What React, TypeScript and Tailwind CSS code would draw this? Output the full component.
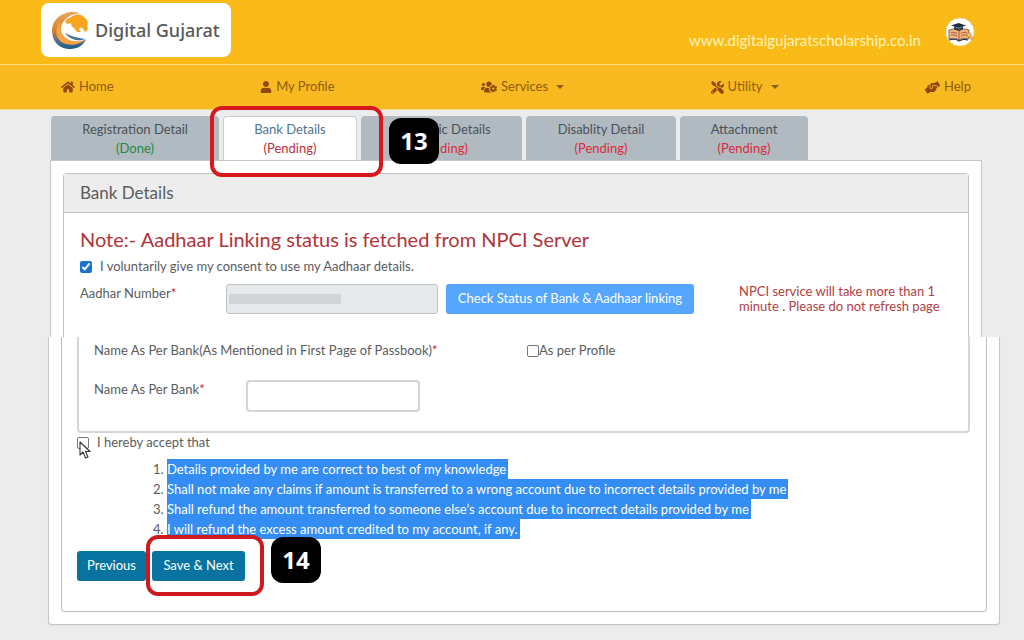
import type { ReactNode } from "react";
import { FaHandsHelping, FaHome, FaTools, FaUser, FaUsersCog } from "react-icons/fa";

type NavItem = { label: string; icon: ReactNode; menu?: boolean };

const navItems: NavItem[] = [
  { label: "Home", icon: <FaHome size={14} /> },
  { label: "My Profile", icon: <FaUser size={12} /> },
  { label: "Services", icon: <FaUsersCog size={16} />, menu: true },
  { label: "Utility", icon: <FaTools size={13} />, menu: true },
  { label: "Help", icon: <FaHandsHelping size={15} /> },
];

const terms = [
  "Details provided by me are correct to best of my knowledge",
  "Shall not make any claims if amount is transferred to a wrong account due to incorrect details provided by me",
  "Shall refund the amount transferred to someone else’s account due to incorrect details provided by me",
  "I will refund the excess amount credited to my account, if any.",
];

function GujaratMark() {
  return (
    <svg viewBox="0 0 38 40" className="h-10 w-[38px] shrink-0" aria-hidden="true">
      <defs>
        <linearGradient id="ring" x1="0" y1="0" x2="0" y2="1">
          <stop offset="0" stopColor="#e8a45a" />
          <stop offset="0.5" stopColor="#d9822f" />
          <stop offset="0.75" stopColor="#5f6f80" />
          <stop offset="1" stopColor="#175a90" />
        </linearGradient>
      </defs>
      <path d="M29 3C14-1 1 8 1 21c0 11 8 18 18 18 8 0 14-4 16-10-6 5-14 6-20 1C4 21 11 5 29 3Z" fill="url(#ring)" />
      <path d="M10 11C3 18 4 29 12 33c7 3 16 2 22-3-7 2-14 2-19-2-5-4-7-10-5-17Z" fill="#f4a243" />
      <path d="M14 23c5 3 12 5 20 6-5 3-15 1-20-6Z" fill="#41749f" />
      <path d="M16 9c3-1 5-3 8-4 4-1 7 0 9 2l3 3c1 2 1 4 0 6l1 3-3 3-2-3c-1-2-3-1-4 0l2 3h-4l-3-4c-2-1-3-3-3-5l-4 1-2-2Z" fill="#f9a51f" />
    </svg>
  );
}

function ScholarBadge() {
  return (
    <svg viewBox="0 0 30 30" className="size-[30px]" aria-hidden="true">
      <circle cx="15" cy="15" r="14" fill="#fff" stroke="#d9cfae" strokeWidth="0.6" />
      <path d="M4 13l4-1c3-.5 5 .5 6 2 2-2 4-2.500 6-2l4 1v9c-4-1-7-1-10 1-3-2-6-2-10-1Z" fill="#f0b878" stroke="#5b3a42" strokeWidth="0.7" />
      <path d="M14 14v9M6 15.500c2-.5 4 0 6 1M6 18c2-.5 4 0 6 1M16 16.500c2-1 4-1.500 6-1M16 19c2-1 4-1.500 6-1" stroke="#a8484b" strokeWidth="0.9" fill="none" />
      <path d="M4 23c4-1 8-1 10 1 3-2 6-2 9-1" stroke="#27364d" strokeWidth="1.100" fill="none" />
      <path d="M6 8.500l7.500-2.500L21 8.500 13.500 11Z" fill="#1d2d44" />
      <path d="M9 9.500v3c3 1.500 6 1.500 9 0v-3l-4.500 2Z" fill="#2c3c55" />
      <circle cx="24" cy="18" r="2" fill="#f7c76f" stroke="#c9812c" strokeWidth="0.8" />
      <circle cx="26.500" cy="21" r="1.500" fill="#f7c76f" stroke="#d98e34" strokeWidth="0.8" />
    </svg>
  );
}

function Caret() {
  return (
    <svg viewBox="0 0 8 4" className="ml-1 h-1 w-2" aria-hidden="true">
      <path d="M0 0h8L4 4Z" fill="currentColor" />
    </svg>
  );
}

function StepBadge({ step, className }: { step: number; className: string }) {
  return (
    <span
      className={`absolute z-20 flex h-[46px] w-[50px] items-center justify-center rounded-xl bg-black font-['Open_Sans',sans-serif] text-2xl font-bold text-white ${className}`}
    >
      {step}
    </span>
  );
}

function Tab({ title, state, className, active, done }: { title: string; state: string; className: string; active?: boolean; done?: boolean }) {
  return (
    <button
      type="button"
      role="tab"
      aria-selected={!!active}
      className={`h-11 rounded-t-sm border border-b-0 leading-[19px] whitespace-nowrap ${
        active ? "border-[#c9ced2] bg-white text-[#4a7590]" : "border-[#b3bcc2] bg-[#b0bac0] text-[#4a5158]"
      } ${className}`}
    >
      <span className="block">{title}</span>
      <span className={`block ${done ? "text-[#25883e]" : active ? "text-[#b8323f]" : "text-[#dc2a3c]"}`}>({state})</span>
    </button>
  );
}

export default function App() {
  return (
    <div className="min-h-screen bg-[#ececec] pb-4 font-[Lato,'Open_Sans',sans-serif] text-[13px] text-[#5a5c5e]">
      <header className="bg-[#fabb18]">
        <div className="flex h-16 items-center justify-between pr-[49px] pl-[41px]">
          <a href="#home" className="mb-1 flex h-[54px] w-[190px] items-center gap-1.5 rounded-lg bg-white pl-2.5 font-['Noto_Sans',sans-serif] text-[18px] font-medium whitespace-nowrap text-[#58595d]">
            <GujaratMark />
            Digital Gujarat
          </a>
          <div className="flex items-center gap-6">
            <a href="#site" className="pt-4 text-[15px] text-[#fff3b8]">
              www.digitalgujaratscholarship.co.in
            </a>
            <ScholarBadge />
          </div>
        </div>
        <nav className="flex h-[46px] items-center justify-between border-y border-[#fbdc80] bg-[#f8ba20] pr-[53px] pl-[61px] text-[#8f5a10]">
          {navItems.map((item) => (
            <a key={item.label} href={`#${item.label}`} className="flex items-center gap-1">
              <span className="text-[#8f480f]">{item.icon}</span>
              {item.label}
              {item.menu && <Caret />}
            </a>
          ))}
        </nav>
      </header>

      <main>
        <div role="tablist" className="ml-[51px] flex gap-1 pt-1.5">
          <Tab title="Registration Detail" state="Done" done className="w-[168px]" />
          <div className="relative">
            <Tab title="Bank Details" state="Pending" active className="w-[134px]" />
            <span className="pointer-events-none absolute -top-2.5 -left-[13px] z-10 h-[71px] w-[173px] rounded-xl border-4 border-[#d7181d]" />
          </div>
          <div className="relative">
            <Tab title="Academic Details" state="Pending" className="w-[161px]" />
            <StepBadge step={13} className="top-0.5 left-7" />
          </div>
          <Tab title="Disablity Detail" state="Pending" className="w-[150px]" />
          <Tab title="Attachment" state="Pending" className="w-32" />
        </div>

        <section className="mr-[42px] ml-[50px] border border-b-0 border-[#c6c6c6] bg-white px-3 pt-3">
          <div className="h-[164px] rounded-t border border-b-0 border-[#c2c2c2]">
            <h2 className="h-[39px] border-b border-[#c2c2c2] bg-[#ededed] px-4 text-[17px] leading-[37px]">Bank Details</h2>
            <div className="px-4 pt-3">
              <p className="text-[20px] leading-7 text-[#b23338]">Note:- Aadhaar Linking status is fetched from NPCI Server</p>
              <label className="flex h-7 items-center gap-2">
                <input type="checkbox" defaultChecked className="size-3 accent-[#1a73d0]" />
                I voluntarily give my consent to use my Aadhaar details.
              </label>
              <div className="flex items-start pt-[3px]">
                <label htmlFor="aadhaar" className="w-[146px]">
                  Aadhar Number<span className="text-[#d02030]">*</span>
                </label>
                <span className="relative">
                  <input id="aadhaar" type="text" readOnly className="block h-[30px] w-[212px] rounded-[3px] border border-[#bfc3c5] bg-[#e7eaeb]" />
                  <span className="absolute top-2.5 left-[3px] h-2.5 w-28 bg-[#d2d5d6]" />
                </span>
                <button type="button" className="ml-2 h-[30px] w-[248px] rounded-[3px] bg-[#55a6fd] whitespace-nowrap text-white">
                  Check Status of Bank &amp; Aadhaar linking
                </button>
                <p className="ml-[45px] w-[212px] leading-[15px] text-[#b04044]">NPCI service will take more than 1 minute . Please do not refresh page</p>
              </div>
            </div>
          </div>
        </section>

        <section className="mr-6 ml-12 rounded-b border border-t-0 border-[#c6c6c6] bg-white px-3 pb-3 shadow-xs">
          <div className="rounded-b border border-t-0 border-[#bebebe] pr-4 pl-[15px] pb-[30px]">
            <div className="h-24 rounded-b border-2 border-t-0 border-[#d6d6d6] px-[15px] pt-1">
              <div className="flex h-5 items-center">
                <span className="w-[433px] whitespace-nowrap">
                  Name As Per Bank(As Mentioned in First Page of Passbook)<span className="text-[#d02030]">*</span>
                </span>
                <label className="flex items-center">
                  <input type="checkbox" className="size-3 appearance-none rounded-xs border border-[#777] bg-white" />
                  As per Profile
                </label>
              </div>
              <div className="flex pt-[19px]">
                <label htmlFor="bank-name" className="w-[152px]">
                  Name As Per Bank<span className="text-[#d02030]">*</span>
                </label>
                <input id="bank-name" type="text" className="h-8 w-[174px] rounded border-2 border-[#d4d6d8] bg-white px-2" />
              </div>
            </div>

            <div className="relative">
              <label className="flex h-5 items-center gap-2">
                <input type="checkbox" className="size-3 appearance-none rounded-xs border border-[#777] bg-white" />
                I hereby accept that
              </label>
              <svg viewBox="0 0 12 18" className="absolute top-2 left-0.5 h-[18px] w-3" aria-hidden="true">
                <path d="M1 1v13l3-3 2.500 6 2.500-1-2.500-5.500H11Z" fill="#fff" stroke="#333" strokeWidth="1.100" strokeLinejoin="round" />
              </svg>
            </div>

            <ol className="ml-[90px] list-decimal pt-1.5 leading-[20px] marker:text-[#5a5c5e]">
              {terms.map((term) => (
                <li key={term} className="whitespace-nowrap">
                  <span className="inline-block bg-[#338df2] pr-0.5 align-top text-white">{term}</span>
                </li>
              ))}
            </ol>

            <div className="flex gap-1.5 pt-3">
              <button type="button" className="h-[30px] w-[69px] rounded-[3px] bg-[#0873a0] text-white">
                Previous
              </button>
              <div className="relative">
                <button type="button" className="block h-[30px] w-[93px] rounded-[3px] bg-[#0873a0] text-white">
                  Save &amp; Next
                </button>
                <span className="pointer-events-none absolute -top-4 -left-1.5 z-10 h-[61px] w-[118px] rounded-xl border-4 border-[#cf191e]" />
                <StepBadge step={14} className="-top-3.5 left-[119px]" />
              </div>
            </div>
          </div>
        </section>
      </main>
    </div>
  );
}
